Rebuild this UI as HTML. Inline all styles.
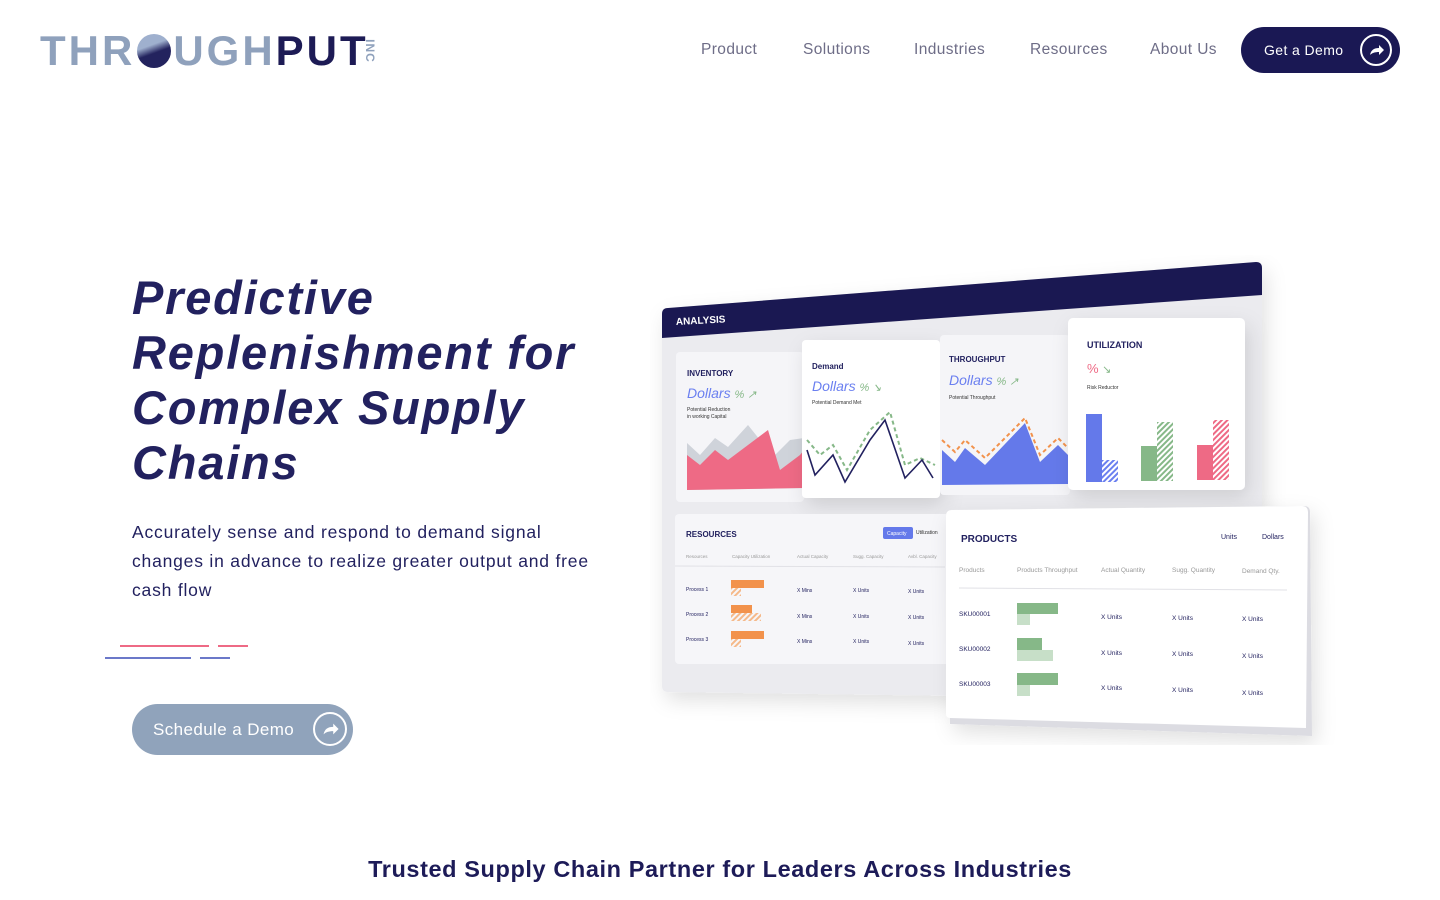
<!DOCTYPE html>
<html><head><meta charset="utf-8"><style>
*{margin:0;padding:0;box-sizing:border-box}
body{width:1440px;height:900px;background:#fff;font-family:"Liberation Sans",sans-serif;position:relative;overflow:hidden;color:#22215f}
.nav a{position:absolute;top:41px;font-size:15.5px;color:#6e6d87;text-decoration:none;letter-spacing:.4px}
.btn{position:absolute;border-radius:30px;color:#fff;display:flex;align-items:center}
.circ{position:absolute;border:2px solid #fff;border-radius:50%}
h1{position:absolute;left:132px;top:270px;font-size:47px;line-height:55px;font-style:italic;font-weight:bold;color:#22215f;letter-spacing:1.8px}
p.lead{position:absolute;left:132px;top:518px;white-space:nowrap;font-size:17.5px;line-height:29px;color:#22215f;letter-spacing:.8px}
</style></head><body>
<div style="position:absolute;left:40px;top:28px;font-size:42px;font-weight:bold;letter-spacing:3px;line-height:46px">
<span style="color:#8fa1bc">THR</span><span style="display:inline-block;width:34px;height:34px;border-radius:50%;background:linear-gradient(160deg,#9fb0ce 35%,#23235e 55%);vertical-align:-3px;margin:0 2px"></span><span style="color:#8fa1bc">UGH</span><span style="color:#1d1b55">PUT</span></div>
<div style="position:absolute;left:358px;top:44px;font-size:12px;font-weight:bold;color:#8fa1bc;transform:rotate(90deg);letter-spacing:1px">INC</div>
<div class="nav">
<a style="left:701px">Product</a><a style="left:803px">Solutions</a><a style="left:914px">Industries</a><a style="left:1030px">Resources</a><a style="left:1150px">About Us</a>
</div>
<div class="btn" style="left:1241px;top:27px;width:159px;height:46px;background:#1a1854;font-size:14px;padding-left:23px;letter-spacing:.4px">Get a Demo
<div class="circ" style="left:119px;top:7px;width:32px;height:32px"><svg width="28" height="28" viewBox="0 0 28 28"><path d="M8 19c1-5 4-7 9-7v-3l5 5-5 5v-3c-4 0-7 1-9 3z" fill="#fff"/></svg></div></div>
<h1>Predictive<br>Replenishment for<br>Complex Supply<br>Chains</h1>
<p class="lead">Accurately sense and respond to demand signal<br>changes in advance to realize greater output and free<br>cash flow</p>
<div style="position:absolute;left:120px;top:645px;width:89px;height:2px;background:#ee6a85"></div>
<div style="position:absolute;left:218px;top:645px;width:30px;height:2px;background:#ee6a85"></div>
<div style="position:absolute;left:105px;top:657px;width:86px;height:2px;background:#6b78c9"></div>
<div style="position:absolute;left:200px;top:657px;width:30px;height:2px;background:#6b78c9"></div>
<div class="btn" style="left:132px;top:704px;width:221px;height:51px;background:#90a3bb;font-size:17px;padding-left:21px;border-radius:26px;letter-spacing:.4px">Schedule a Demo
<div class="circ" style="left:181px;top:8px;width:34px;height:34px"><svg width="30" height="30" viewBox="0 0 28 28"><path d="M8 19c1-5 4-7 9-7v-3l5 5-5 5v-3c-4 0-7 1-9 3z" fill="#fff"/></svg></div></div>

<svg style="position:absolute;left:650px;top:255px" width="720" height="490" viewBox="650 255 720 490" font-family="Liberation Sans">
<defs><filter id="sh" x="-10%" y="-10%" width="130%" height="140%"><feDropShadow dx="4" dy="8" stdDeviation="10" flood-color="#000" flood-opacity=".12"/></filter>
<pattern id="hb" width="4" height="4" patternUnits="userSpaceOnUse" patternTransform="rotate(45)"><rect width="2" height="4" fill="#6a7ff0"/></pattern>
<pattern id="hg" width="4" height="4" patternUnits="userSpaceOnUse" patternTransform="rotate(45)"><rect width="2" height="4" fill="#86b888"/></pattern>
<pattern id="hr" width="4" height="4" patternUnits="userSpaceOnUse" patternTransform="rotate(45)"><rect width="2" height="4" fill="#ee6a85"/></pattern>
<pattern id="ho" width="4" height="4" patternUnits="userSpaceOnUse" patternTransform="rotate(45)"><rect width="2" height="4" fill="#f5b98a"/></pattern></defs>
<path d="M668 308 L1256 262 Q1262 262 1262 268 L1262 700 L668 692 Q662 692 662 686 L662 314 Q662 308 668 308Z" fill="#ebebef" filter="url(#sh)"/>
<path d="M668 308 L1256 262 Q1262 262 1262 268 L1262 295 L662 338 L662 314 Q662 308 668 308Z" fill="#1a1852"/>
<text x="676" y="325" font-size="10" font-weight="bold" fill="#fff" transform="rotate(-3 676 325)">ANALYSIS</text>
<rect x="676" y="352" width="128" height="150" rx="4" fill="#f5f5f8"/>
<text x="687" y="376" font-size="8" font-weight="bold" fill="#22215f">INVENTORY</text>
<text x="687" y="398" font-size="14" font-style="italic" fill="#6a7ff0">Dollars <tspan fill="#86b888" font-size="11">% ↗</tspan></text>
<text x="687" y="411" font-size="5" fill="#333">Potential Reduction</text><text x="687" y="418" font-size="5" fill="#333">in working Capital</text>
<path d="M687 443 L700 455 L715 438 L728 447 L748 425 L760 440 L770 460 L790 440 L804 438 L804 488 L687 490Z" fill="#cfd3da"/>
<path d="M687 455 L700 465 L715 450 L728 460 L768 430 L780 470 L800 455 L804 450 L804 488 L687 490Z" fill="#ee6a85"/>
<rect x="802" y="340" width="138" height="158" rx="4" fill="#fff" filter="url(#sh)"/>
<text x="812" y="369" font-size="8" font-weight="bold" fill="#22215f">Demand</text>
<text x="812" y="391" font-size="14" font-style="italic" fill="#6a7ff0">Dollars <tspan fill="#86b888" font-size="11">% ↘</tspan></text>
<text x="812" y="404" font-size="5" fill="#333">Potential Demand Met</text>
<path d="M807 440 L820 455 L833 445 L847 470 L870 430 L890 412 L905 465 L920 458 L935 465" stroke="#86b888" stroke-width="2" stroke-dasharray="4 3" fill="none"/>
<path d="M807 450 L815 475 L833 455 L845 482 L870 440 L885 420 L905 478 L922 460 L933 478" stroke="#22215f" stroke-width="1.6" fill="none"/>
<rect x="940" y="335" width="130" height="160" rx="4" fill="#f5f5f8"/>
<text x="949" y="362" font-size="8" font-weight="bold" fill="#22215f">THROUGHPUT</text>
<text x="949" y="385" font-size="14" font-style="italic" fill="#6a7ff0">Dollars <tspan fill="#86b888" font-size="11">% ↗</tspan></text>
<text x="949" y="399" font-size="5" fill="#333">Potential Throughput</text>
<path d="M942 450 L955 462 L965 448 L985 465 L1025 423 L1040 462 L1058 445 L1068 455 L1068 484 L942 485Z" fill="#6479ea"/>
<path d="M942 440 L955 452 L965 440 L985 458 L1025 418 L1040 455 L1058 438 L1068 448" stroke="#f2924c" stroke-width="2" stroke-dasharray="4 3" fill="none"/>
<rect x="1068" y="318" width="177" height="172" rx="5" fill="#fff" filter="url(#sh)"/>
<text x="1087" y="348" font-size="9" font-weight="bold" fill="#22215f">UTILIZATION</text>
<text x="1087" y="373" font-size="13" fill="#ee6a85">% <tspan fill="#86b888" font-size="11">↘</tspan></text>
<text x="1087" y="389" font-size="5" fill="#333">Risk Reductor</text>
<rect x="1086" y="414" width="16" height="68" fill="#6479ea"/><rect x="1102" y="460" width="16" height="22" fill="url(#hb)"/>
<rect x="1141" y="446" width="16" height="35" fill="#86b888"/><rect x="1157" y="422" width="16" height="59" fill="url(#hg)"/>
<rect x="1197" y="445" width="16" height="35" fill="#ee6a85"/><rect x="1213" y="420" width="16" height="60" fill="url(#hr)"/>
<rect x="675" y="514" width="275" height="150" rx="4" fill="#f6f6f9"/>
<text x="686" y="537" font-size="8" font-weight="bold" fill="#22215f">RESOURCES</text>
<rect x="883" y="527" width="30" height="12" rx="2" fill="#6479ea"/><text x="887" y="535" font-size="5" fill="#fff">Capacity</text>
<text x="916" y="534" font-size="5" fill="#333">Utilization</text>
<g font-size="4.5" fill="#999"><text x="686" y="558">Resources</text><text x="732" y="558">Capacity Utilization</text><text x="797" y="558">Actual Capacity</text><text x="853" y="558">Sugg. Capacity</text><text x="908" y="558">Avbl. Capacity</text></g>
<line x1="675" y1="566" x2="945" y2="567" stroke="#e1e1e6"/>
<g font-size="5" fill="#22215f"><text x="686" y="591">Process 1</text><text x="686" y="616">Process 2</text><text x="686" y="641">Process 3</text>
<text x="797" y="592">X Mins</text><text x="853" y="592">X Units</text><text x="908" y="593">X Units</text>
<text x="797" y="618">X Mins</text><text x="853" y="618">X Units</text><text x="908" y="619">X Units</text>
<text x="797" y="643">X Mins</text><text x="853" y="643">X Units</text><text x="908" y="645">X Units</text></g>
<rect x="731" y="580" width="33" height="8" fill="#f2924c"/><rect x="731" y="588" width="10" height="8" fill="url(#ho)"/>
<rect x="731" y="605" width="21" height="8" fill="#f2924c"/><rect x="731" y="613" width="30" height="8" fill="url(#ho)"/>
<rect x="731" y="631" width="33" height="8" fill="#f2924c"/><rect x="731" y="639" width="10" height="8" fill="url(#ho)"/>
<path d="M952 510 L1304 506 Q1310 506 1310 512 L1312 736 L950 724 L946 516 Q946 510 952 510Z" fill="#dcdce2" filter="url(#sh)"/>
<path d="M952 510 L1302 506 Q1308 506 1308 512 L1306 728 L950 718 Q946 718 946 714 L946 516 Q946 510 952 510Z" fill="#fff"/>
<text x="961" y="542" font-size="10" font-weight="bold" fill="#22215f">PRODUCTS</text>
<text x="1221" y="539" font-size="7" fill="#22215f">Units</text><text x="1262" y="539" font-size="7" fill="#22215f">Dollars</text>
<g font-size="6.5" fill="#999"><text x="959" y="572">Products</text><text x="1017" y="572">Products Throughput</text><text x="1101" y="572">Actual Quantity</text><text x="1172" y="572">Sugg. Quantity</text><text x="1242" y="573">Demand Qty.</text></g>
<line x1="959" y1="588" x2="1287" y2="590" stroke="#e1e1e6"/>
<g font-size="6.5" fill="#22215f"><text x="959" y="616">SKU00001</text><text x="959" y="651">SKU00002</text><text x="959" y="686">SKU00003</text>
<text x="1101" y="619">X Units</text><text x="1172" y="620">X Units</text><text x="1242" y="621">X Units</text>
<text x="1101" y="655">X Units</text><text x="1172" y="656">X Units</text><text x="1242" y="658">X Units</text>
<text x="1101" y="690">X Units</text><text x="1172" y="692">X Units</text><text x="1242" y="695">X Units</text></g>
<rect x="1017" y="603" width="41" height="11" fill="#86b888"/><rect x="1017" y="614" width="13" height="11" fill="#c7dfc8"/>
<rect x="1017" y="638" width="25" height="12" fill="#86b888"/><rect x="1017" y="650" width="36" height="11" fill="#c7dfc8"/>
<rect x="1017" y="673" width="41" height="12" fill="#86b888"/><rect x="1017" y="685" width="13" height="11" fill="#c7dfc8"/>
</svg>

<div style="position:absolute;left:0;width:1440px;top:856px;text-align:center;font-size:23.5px;font-weight:bold;color:#1d1b58;letter-spacing:.6px">Trusted Supply Chain Partner for Leaders Across Industries</div>
</body></html>
